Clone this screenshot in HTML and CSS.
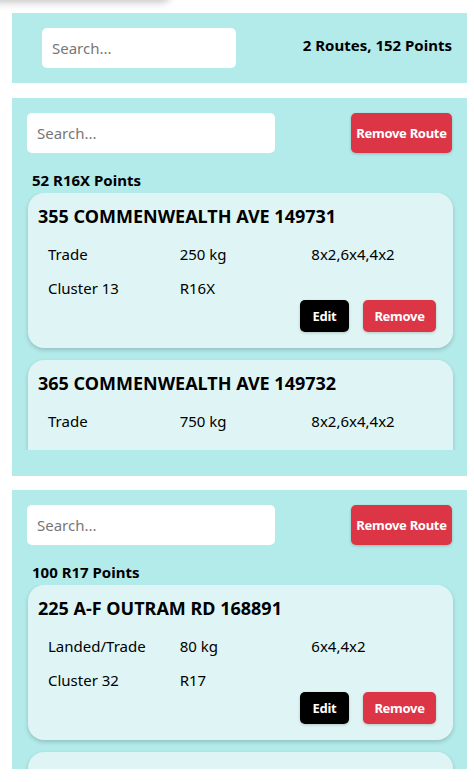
FILE: index.html
```html
<!DOCTYPE html>
<html lang="en">
<head>
    <meta charset="UTF-8">
    <meta name="viewport" content="width=device-width, initial-scale=1.0">
    <title>Routes</title>
    <link rel="stylesheet" href="styles.css">
</head>
<body>

<div class="menu"></div>

<div class="app">
    <div class="summary">
        <input class="search summary-search" type="text" placeholder="Search...">
        <div class="stats">2 Routes, 152 Points</div>
    </div>

    <div class="route">
        <div class="route-top">
            <input class="search" type="text" placeholder="Search...">
            <button class="btn btn-red btn-route">Remove Route</button>
        </div>
        <div class="route-label">52 R16X Points</div>
        <div class="points">
            <div class="point">
                <div class="point-title">355 COMMENWEALTH AVE 149731</div>
                <div class="point-row"><span>Trade</span><span>250 kg</span><span>8x2,6x4,4x2</span></div>
                <div class="point-row"><span>Cluster 13</span><span>R16X</span><span></span></div>
                <div class="point-actions">
                    <button class="btn btn-black">Edit</button>
                    <button class="btn btn-red">Remove</button>
                </div>
            </div>
            <div class="point">
                <div class="point-title">365 COMMENWEALTH AVE 149732</div>
                <div class="point-row"><span>Trade</span><span>750 kg</span><span>8x2,6x4,4x2</span></div>
                <div class="point-row"><span>Cluster 13</span><span>R16X</span><span></span></div>
                <div class="point-actions">
                    <button class="btn btn-black">Edit</button>
                    <button class="btn btn-red">Remove</button>
                </div>
            </div>
        </div>
    </div>

    <div class="route">
        <div class="route-top">
            <input class="search" type="text" placeholder="Search...">
            <button class="btn btn-red btn-route">Remove Route</button>
        </div>
        <div class="route-label">100 R17 Points</div>
        <div class="points">
            <div class="point">
                <div class="point-title">225 A-F OUTRAM RD 168891</div>
                <div class="point-row"><span>Landed/Trade</span><span>80 kg</span><span>6x4,4x2</span></div>
                <div class="point-row"><span>Cluster 32</span><span>R17</span><span></span></div>
                <div class="point-actions">
                    <button class="btn btn-black">Edit</button>
                    <button class="btn btn-red">Remove</button>
                </div>
            </div>
            <div class="point">
                <div class="point-title">227 A-F OUTRAM RD 168892</div>
                <div class="point-row"><span>Landed/Trade</span><span>60 kg</span><span>6x4</span></div>
                <div class="point-row"><span>Cluster 32</span><span>R17</span><span></span></div>
                <div class="point-actions">
                    <button class="btn btn-black">Edit</button>
                    <button class="btn btn-red">Remove</button>
                </div>
            </div>
        </div>
    </div>
</div>

</body>
</html>
```

FILE: styles.css
```css
body {
    font-family: "Noto Sans", "Open Sans", sans-serif;
    margin: 0;
    background-color: #fff;
    color: #000;
}
.menu {
    position: absolute;
    top: -50px;
    left: -20px;
    width: 190px;
    height: 50px;
    border-radius: 8px;
    background-color: #fff;
    box-shadow: 0 2px 8px rgba(0, 0, 0, 0.25);
}
.app {
    height: 769px;
    overflow: hidden;
    padding: 13px 7px 0 12px;
    box-sizing: border-box;
}
.summary {
    display: flex;
    justify-content: space-between;
    align-items: center;
    background-color: #b3eaea;
    padding: 15px 15px 15px 30px;
    margin-bottom: 15px;
}
.search {
    font-family: inherit;
    font-size: 15px;
    height: 40px;
    width: 248px;
    padding: 0 10px;
    border: none;
    border-radius: 5px;
    background-color: #fff;
    box-sizing: border-box;
    outline: none;
}
.search::placeholder {
    color: #777;
}
.summary-search {
    width: 194px;
}
.stats {
    font-weight: bold;
    font-size: 15px;
    margin-bottom: 6px;
}
.route {
    background-color: #b3eaea;
    padding: 15px 15px 26px 15px;
    margin-bottom: 14px;
}
.route-top {
    display: flex;
    justify-content: space-between;
    align-items: center;
}
.route-label {
    font-weight: bold;
    font-size: 15px;
    line-height: 20px;
    margin: 17px 0 3px 5px;
}
.points {
    height: 257px;
    overflow: hidden;
    margin: 0 -8px;
    padding: 0 7px 0 9px;
}
.point {
    background-color: #dff5f5;
    border-radius: 16px;
    padding: 10px;
    margin-bottom: 12px;
    box-shadow: 0 2px 4px rgba(0, 0, 0, 0.18);
}
.point-title {
    font-weight: bold;
    font-size: 18px;
    line-height: 26px;
    margin-bottom: 8px;
}
.point-row {
    display: grid;
    grid-template-columns: 1fr 1fr 1fr;
    padding: 7px 0 7px 10px;
    font-size: 15px;
    line-height: 20px;
}
.point-actions {
    display: flex;
    justify-content: flex-end;
    gap: 14px;
    margin: -5px 7px 6px 0;
}
.btn {
    font-family: inherit;
    font-weight: bold;
    font-size: 13px;
    letter-spacing: -0.3px;
    white-space: nowrap;
    padding: 0;
    color: #fff;
    border: none;
    border-radius: 5px;
    height: 32px;
    cursor: pointer;
    box-shadow: 0 1px 3px rgba(0, 0, 0, 0.2);
}
.btn-red {
    background-color: #dc3545;
    width: 73px;
}
.btn-black {
    background-color: #000;
    width: 49px;
}
.btn-route {
    height: 40px;
    width: 101px;
}
```
